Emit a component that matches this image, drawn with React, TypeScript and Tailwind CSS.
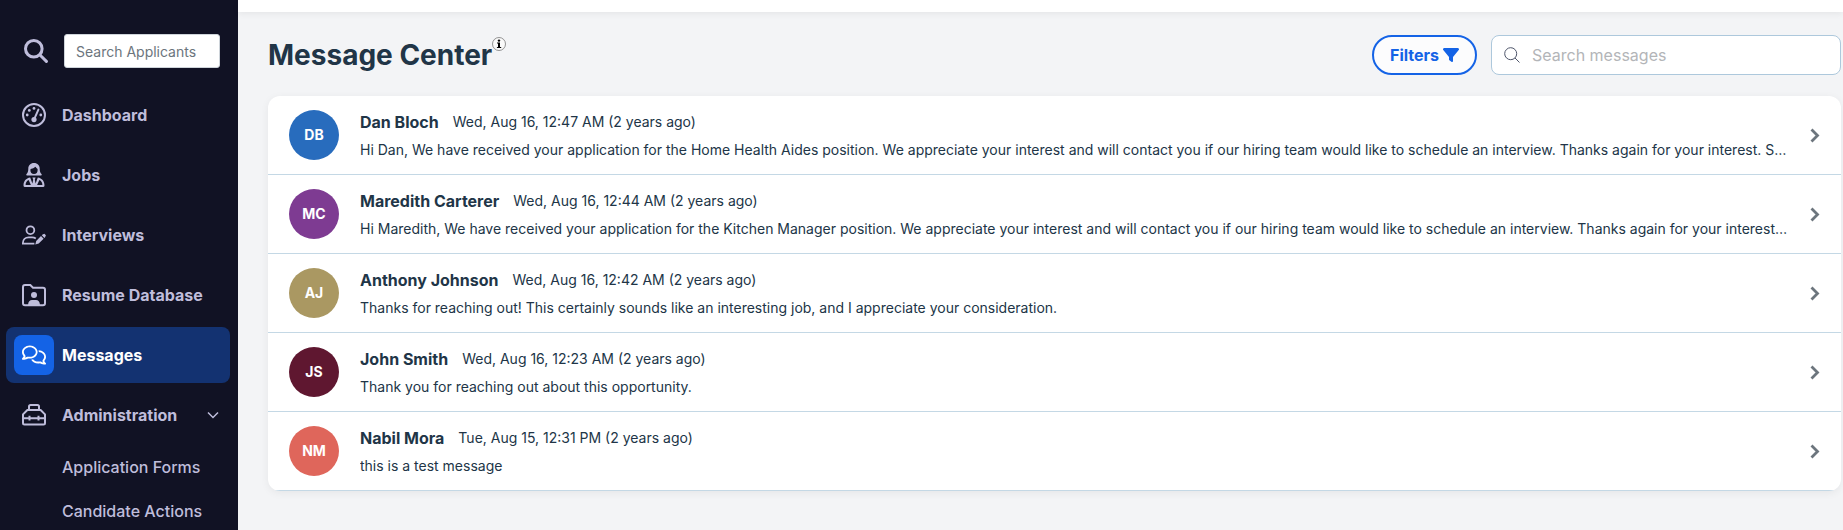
import { useState } from "react";
import { FaFilter, FaRegComments } from "react-icons/fa6";

const DashboardIcon = () => (
  <svg viewBox="0 0 24 24" className="size-6" fill="currentColor" aria-hidden="true">
    <circle cx="12" cy="12" r="11" fill="none" stroke="currentColor" strokeWidth="2" />
    <circle cx="12" cy="5.4" r="1.4" />
    <circle cx="7.3" cy="7.4" r="1.4" />
    <circle cx="5.2" cy="12" r="1.4" />
    <circle cx="18.8" cy="12" r="1.4" />
    <circle cx="12" cy="16.6" r="2.6" />
    <path d="M12 16.6 16.4 6.6" stroke="currentColor" strokeWidth="2" strokeLinecap="round" />
  </svg>
);

const JobsIcon = () => (
  <svg viewBox="0 0 24 24" className="size-6" fill="currentColor" fillRule="evenodd" aria-hidden="true">
    <path d="M12 0C8.4 0 6.3 2.5 6.3 5.8C6.3 8.6 5.700 10 4.3 11.2Q4 12.4 5.2 12.4H18.8Q20 12.4 19.7 11.2C18.3 10 17.7 8.6 17.7 5.8C17.7 2.5 15.6 0 12 0ZM8.6 6Q11.6 5.8 13.4 3.8Q14.4 5.4 15.6 6V7.3A3.6 3.6 0 0 1 8.4 7.3Z" />
    <path d="M8.2 14.6C4 15.2 1.5 18.3 1.5 22.4Q1.5 24 3 24H21Q22.5 24 22.5 22.4C22.5 18.3 20 15.2 15.8 14.6L13.6 20.5L12.8 16.8L13.6 14.6H10.4L11.2 16.8L10.4 20.5ZM6.6 17L8.9 22.1H3.6C3.7 19.5 4.7 17.9 6.6 17ZM17.4 17L15.1 22.1H20.4C20.3 19.5 19.3 17.9 17.4 17Z" />
  </svg>
);

const InterviewsIcon = () => (
  <svg viewBox="0 0 24 24" className="size-6" fill="none" stroke="currentColor" strokeWidth="1.8" aria-hidden="true">
    <circle cx="8.4" cy="7.2" r="3.9" />
    <path d="M12.4 20.6H.9V20C.9 16.8 3.4 14.4 6.6 14.4H10.2Q12.2 14.4 13.8 15.5" />
    <path
      d="M20.6 11.6 22.4 10.8 23.9 12.3 23.1 14.2 22.4 14.9 19.8 12.3ZM19 13.1 21.6 15.7 16.7 20.6 13.3 21.5 14.2 18Z"
      fill="currentColor"
      stroke="none"
    />
  </svg>
);

const ResumeIcon = () => (
  <svg viewBox="0 0 24 24" className="size-6" fill="currentColor" aria-hidden="true">
    <path
      d="M3 2.1H8.3L11 4.8H21Q23 4.8 23 6.8V20.2Q23 22.2 21 22.2H3Q1 22.2 1 20.2V4.1Q1 2.1 3 2.1Z"
      fill="none"
      stroke="currentColor"
      strokeWidth="2"
    />
    <circle cx="12" cy="12" r="3" />
    <path d="M6 22C6.2 18.6 7.8 17 10 17H14C16.2 17 17.8 18.6 18 22Z" />
  </svg>
);

const ToolboxIcon = () => (
  <svg viewBox="0 0 24 24" className="size-6" fill="none" stroke="currentColor" strokeWidth="2" strokeLinejoin="round" aria-hidden="true">
    <path d="M7 7V3.6Q7 2 8.6 2H15.4Q17 2 17 3.6V7" />
    <path d="M5.4 7H18.6L23 11.4V20Q23 21.5 21.5 21.5H2.5Q1 21.5 1 20V11.4Z" />
    <path d="M1 15.2H23M7.5 12.8V17.6M16.5 12.8V17.6" />
  </svg>
);

const navItems = [
  { label: "Dashboard", icon: <DashboardIcon /> },
  { label: "Jobs", icon: <JobsIcon /> },
  { label: "Interviews", icon: <InterviewsIcon /> },
  { label: "Resume Database", icon: <ResumeIcon /> },
  { label: "Messages", icon: <FaRegComments className="size-6" /> },
];

const adminItems = ["Application Forms", "Candidate Actions"];

const messages = [
  {
    initials: "DB",
    color: "bg-[#286cbd]",
    name: "Dan Bloch",
    date: "Wed, Aug 16, 12:47 AM (2 years ago)",
    text: "Hi Dan, We have received your application for the Home Health Aides position. We appreciate your interest and will contact you if our hiring team would like to schedule an interview. Thanks again for your interest. Sincerely, The Hiring Team",
  },
  {
    initials: "MC",
    color: "bg-[#7e3b92]",
    name: "Maredith Carterer",
    date: "Wed, Aug 16, 12:44 AM (2 years ago)",
    text: "Hi Maredith, We have received your application for the Kitchen Manager position. We appreciate your interest and will contact you if our hiring team would like to schedule an interview. Thanks again for your interest. Sincerely, The Hiring Team",
  },
  {
    initials: "AJ",
    color: "bg-[#aa9862]",
    name: "Anthony Johnson",
    date: "Wed, Aug 16, 12:42 AM (2 years ago)",
    text: "Thanks for reaching out! This certainly sounds like an interesting job, and I appreciate your consideration.",
  },
  {
    initials: "JS",
    color: "bg-[#5f1730]",
    name: "John Smith",
    date: "Wed, Aug 16, 12:23 AM (2 years ago)",
    text: "Thank you for reaching out about this opportunity.",
  },
  {
    initials: "NM",
    color: "bg-[#df665b]",
    name: "Nabil Mora",
    date: "Tue, Aug 15, 12:31 PM (2 years ago)",
    text: "this is a test message",
  },
];

function Sidebar() {
  const [active, setActive] = useState("Messages");
  const [adminOpen, setAdminOpen] = useState(true);

  return (
    <aside className="w-[238px] shrink-0 bg-[#111224] pt-[34px] text-[#bfbddb]">
      <div className="flex items-center gap-4 pl-6 pr-[18px]">
        <label htmlFor="applicants" aria-label="Search Applicants">
          <svg viewBox="0 0 24 24" className="size-6" fill="none" stroke="currentColor" strokeWidth="3" strokeLinecap="round" aria-hidden="true">
            <circle cx="9.8" cy="9.8" r="8.3" />
            <path d="M16 16 22.4 22.4" />
          </svg>
        </label>
        <input
          id="applicants"
          type="text"
          placeholder="Search Applicants"
          className="h-[34px] w-full min-w-0 rounded-[3px] border border-[#ced4da] bg-white px-[11px] text-sm text-gray-800 placeholder:text-[#6c757d]"
        />
      </div>
      <nav className="mt-[19px] flex flex-col gap-1 pl-[6px] pr-2">
        {navItems.map((item) => (
          <a
            key={item.label}
            href="#"
            onClick={() => setActive(item.label)}
            className={`flex h-14 items-center gap-2 rounded-lg px-2 font-bold ${
              active === item.label ? "bg-[#133271] text-white" : ""
            }`}
          >
            <span
              className={`flex size-10 items-center justify-center rounded-lg ${
                active === item.label ? "bg-[#1463e6]" : ""
              }`}
            >
              {item.icon}
            </span>
            {item.label}
          </a>
        ))}
        <button
          type="button"
          aria-expanded={adminOpen}
          onClick={() => setAdminOpen(!adminOpen)}
          className="flex h-14 items-center gap-2 px-2 font-bold"
        >
          <span className="flex size-10 items-center justify-center">
            <ToolboxIcon />
          </span>
          Administration
          <svg viewBox="0 0 12 12" className="ml-auto mr-[3px] size-3" fill="none" stroke="currentColor" strokeWidth="1.5" aria-hidden="true">
            <path d="M1 3.5 6 8.5 11 3.5" />
          </svg>
        </button>
      </nav>
      {adminOpen && (
        <div className="mt-[2px] flex flex-col pl-[62px]">
          {adminItems.map((item) => (
            <a key={item} href="#" className="flex h-11 items-center font-medium">
              {item}
            </a>
          ))}
        </div>
      )}
    </aside>
  );
}

function MessageRow({ message }: { message: (typeof messages)[number] }) {
  return (
    <li className="border-b border-[#c4d8e5]">
      <a href="#" className="flex items-start pb-3 pl-[21px] pr-5 pt-[14px]">
        <span
          className={`flex size-[50px] shrink-0 items-center justify-center rounded-full text-sm font-bold text-white ${message.color}`}
        >
          {message.initials}
        </span>
        <div className="ml-[21px] flex min-w-0 flex-1 flex-col gap-1">
          <div className="flex items-center gap-[14px]">
            <span className="font-bold leading-6">{message.name}</span>
            <span className="text-sm leading-6">{message.date}</span>
          </div>
          <p className="truncate text-sm leading-6">{message.text}</p>
        </div>
        <svg viewBox="0 0 16 16" className="ml-4 size-4 shrink-0 self-center" fill="none" stroke="#6c757d" strokeWidth="2.8" aria-hidden="true">
          <path d="M6.500 1.500 12.500 7.500 6.500 13.500" />
        </svg>
      </a>
    </li>
  );
}

export default function App() {
  return (
    <div className="flex h-screen overflow-hidden bg-[#f3f4f6] font-['Inter',sans-serif] text-base text-[#213547]">
      <Sidebar />
      <div className="min-w-0 flex-1">
        <div className="h-3 bg-white shadow-[0_2px_6px_rgba(0,0,0,0.06)]" />
        <main className="pl-[30px] pr-[2px] pt-[23px]">
          <div className="flex items-center gap-[14px]">
            <div className="mr-auto flex items-start">
              <h1 className="text-[28px] font-bold leading-10">Message Center</h1>
              <button type="button" aria-label="About the message center" className="mt-[2px] text-black">
                <svg viewBox="0 0 14 14" className="size-[14px]" aria-hidden="true">
                  <circle cx="7" cy="7" r="6.5" fill="#fafafa" stroke="#777" strokeWidth="0.8" />
                  <circle cx="7" cy="3.6" r="1.2" />
                  <path d="M5 5.500H8V10H9.200V11H4.900V10H6V6.500H5Z" />
                </svg>
              </button>
            </div>
            <button
              type="button"
              className="flex h-10 items-center gap-1 rounded-full border-2 border-[#1463e6] bg-[#fcfcfd] px-4 font-bold text-[#1463e6]"
            >
              Filters
              <FaFilter className="size-4" />
            </button>
            <label className="flex h-10 w-[350px] items-center gap-3 rounded-lg border border-[#adc8dc] bg-white px-3">
              <svg viewBox="0 0 16 16" className="size-4 shrink-0" fill="none" stroke="#4f566b" aria-hidden="true">
                <circle cx="6.7" cy="6.7" r="6" />
                <path d="M11 11 15.5 15.500" />
              </svg>
              <input
                type="text"
                aria-label="Search messages"
                placeholder="Search messages"
                className="w-full min-w-0 outline-none placeholder:text-[#b3b5b8]"
              />
            </label>
          </div>
          <ul className="mt-[21px] overflow-hidden rounded-xl bg-white shadow-[0_2px_8px_rgba(0,0,0,0.06)]">
            {messages.map((message) => (
              <MessageRow key={message.initials} message={message} />
            ))}
          </ul>
        </main>
      </div>
    </div>
  );
}
